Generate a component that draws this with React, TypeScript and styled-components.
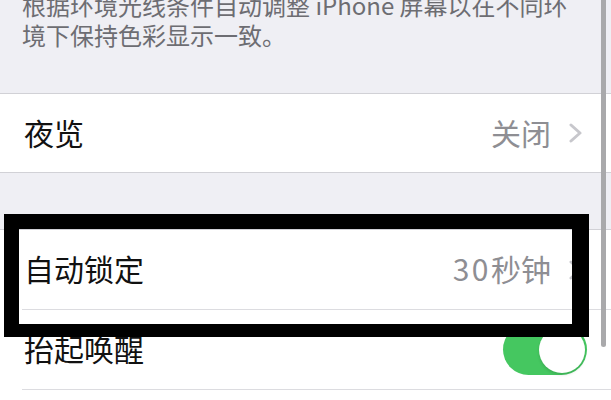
import React from 'react';
import styled, { createGlobalStyle } from 'styled-components';

const GlobalStyle = createGlobalStyle`
    html, body {
        margin: 0;
        padding: 0;
        background: #efeff4;
    }
    body {
        font-family: "Noto Sans CJK SC", "Noto Sans", sans-serif;
        -webkit-font-smoothing: antialiased;
    }
`;

const Page = styled.div`
    position: relative;
    width: 611px;
    height: 400px;
    overflow: hidden;
    background: #efeff4;
`;

const FooterNote = styled.div`
    display: flow-root;
    height: 93px;
    padding: 0 22px;
    box-sizing: border-box;
`;

const NoteText = styled.p`
    margin: -10px 0 0;
    font-size: 24px;
    line-height: 30px;
    color: #6d6d72;
    white-space: nowrap;
`;

const Spacer = styled.div`
    height: 56px;
`;

const Group = styled.div`
    background: #fff;
    border-top: 1px solid #d1d1d6;
    border-bottom: 1px solid #d1d1d6;
`;

const Row = styled.div`
    padding-left: 22px;
    background: #fff;
`;

type RowInnerProps = {
    readonly $last?: boolean
    readonly $height: number
}
const RowInner = styled.div<RowInnerProps>`
    display: flex;
    align-items: center;
    height: ${({ $height }) => $height}px;
    padding-right: 28px;
    border-bottom: ${({ $last }) => $last ? 'none' : '1px solid #dcdce0'};
`;

const Label = styled.span`
    flex: 1;
    font-size: 30px;
    color: #111;
    padding: 0 0 3px 2px;
`;

const Value = styled.span`
    font-size: 30px;
    color: #8e8e93;
    margin-right: 18px;
    padding-bottom: 3px;
`;

const Digits = styled.span`
    letter-spacing: 2.5px;
`;

const Chevron = () => (
    <svg width='14' height='20' viewBox='0 0 14 20'>
        <polyline points='2,2 11,10 2,18' fill='none' stroke='#c7c7cc' strokeWidth='3' strokeLinecap='round' strokeLinejoin='round' />
    </svg>
);

const SwitchTrack = styled.div`
    display: flex;
    justify-content: flex-end;
    align-items: center;
    width: 84px;
    height: 51px;
    border-radius: 26px;
    background: #45c760;
    box-sizing: border-box;
    padding: 2px;
    margin-right: -4px;
`;

const SwitchKnob = styled.div`
    width: 46px;
    height: 46px;
    border-radius: 50%;
    background: #fff;
    box-shadow: 0 2px 3px rgba(0, 0, 0, 0.12);
`;

const ScrollIndicator = styled.div`
    position: absolute;
    top: -4px;
    left: 601px;
    width: 5px;
    height: 351px;
    border-radius: 3px;
    background: #a9a9ab;
`;

const Highlight = styled.div`
    position: absolute;
    left: 4px;
    top: 214px;
    width: 585px;
    height: 123px;
    box-sizing: border-box;
    border: 15px solid #000;
    border-right-width: 17px;
    border-bottom-width: 13px;
`;

export default function App() {
    return (
        <>
            <GlobalStyle />
            <Page>
                <FooterNote>
                    <NoteText>
                        根据环境光线条件自动调整 iPhone 屏幕以在不同环<br />
                        境下保持色彩显示一致。
                    </NoteText>
                </FooterNote>
                <Group>
                    <Row>
                        <RowInner $last $height={78}>
                            <Label>夜览</Label>
                            <Value>关闭</Value>
                            <Chevron />
                        </RowInner>
                    </Row>
                </Group>
                <Spacer />
                <Group>
                    <Row>
                        <RowInner $height={79}>
                            <Label>自动锁定</Label>
                            <Value><Digits>30</Digits>秒钟</Value>
                            <Chevron />
                        </RowInner>
                    </Row>
                    <Row>
                        <RowInner $height={79}>
                            <Label>抬起唤醒</Label>
                            <SwitchTrack>
                                <SwitchKnob />
                            </SwitchTrack>
                        </RowInner>
                    </Row>
                    <Row>
                        <RowInner $last $height={79} />
                    </Row>
                </Group>
                <ScrollIndicator />
                <Highlight />
            </Page>
        </>
    );
}
